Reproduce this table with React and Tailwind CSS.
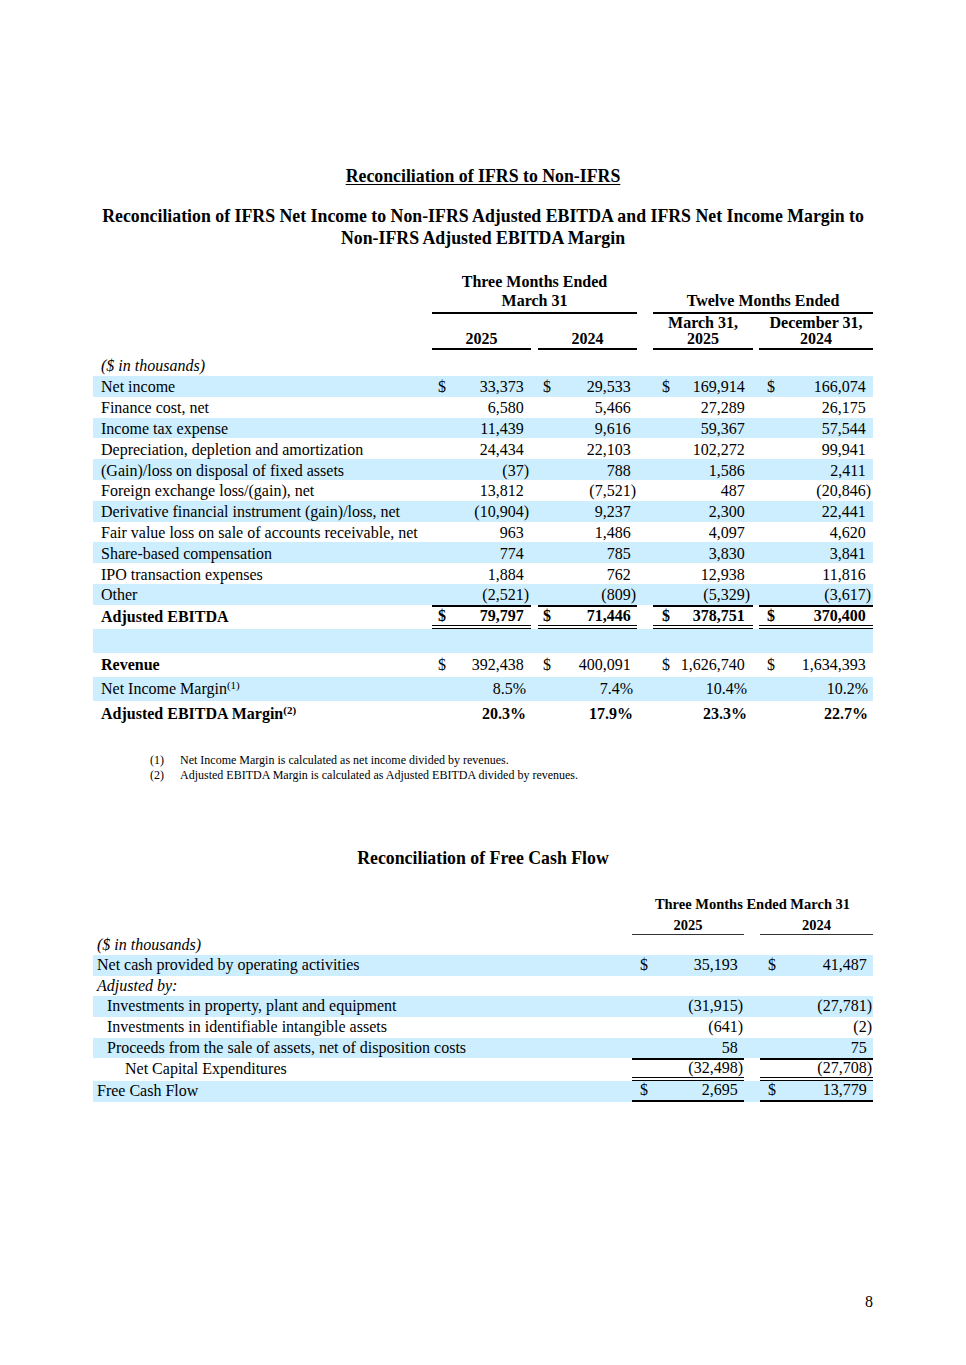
import React from 'react';

const blue = 'bg-[#cceeff]';

const cols = [
  'w-[99px] pl-[6px] pr-[2px]',
  'ml-[7px] w-[99px] pl-[5px] pr-[1px]',
  'ml-[16px] w-[100px] pl-[9px] pr-[3px]',
  'ml-[6px] w-[114px] pl-[8px] pr-[2px]',
];

const rows = [
  ['Net income', ['33,373', '29,533', '169,914', '166,074'], true],
  ['Finance cost, net', ['6,580', '5,466', '27,289', '26,175']],
  ['Income tax expense', ['11,439', '9,616', '59,367', '57,544']],
  ['Depreciation, depletion and amortization', ['24,434', '22,103', '102,272', '99,941']],
  ['(Gain)/loss on disposal of fixed assets', ['(37)', '788', '1,586', '2,411']],
  ['Foreign exchange loss/(gain), net', ['13,812', '(7,521)', '487', '(20,846)']],
  ['Derivative financial instrument (gain)/loss, net', ['(10,904)', '9,237', '2,300', '22,441']],
  ['Fair value loss on sale of accounts receivable, net', ['963', '1,486', '4,097', '4,620']],
  ['Share-based compensation', ['774', '785', '3,830', '3,841']],
  ['IPO transaction expenses', ['1,884', '762', '12,938', '11,816']],
  ['Other', ['(2,521)', '(809)', '(5,329)', '(3,617)']],
];

const Val = ({ v }) => {
  if (v.endsWith('%')) return <span className="pr-[3px]">{v}</span>;
  const neg = v.endsWith(')');
  return (
    <span>
      {v}
      {!neg && <span className="invisible">)</span>}
    </span>
  );
};

const Cells = ({ vals, dollar, extra = '' }) =>
  vals.map((v, i) => (
    <div key={i} className={`flex justify-between ${cols[i]} ${extra}`}>
      <span>{dollar ? '$' : ''}</span>
      <Val v={v} />
    </div>
  ));

const fcfRows = [
  ['Net cash provided by operating activities', ['35,193', '41,487'], 'pl-[4px]', true, true, 'h-[21px]'],
  ['Adjusted by:', ['', ''], 'pl-[4px] italic', false, false, 'h-[20px]'],
  ['Investments in property, plant and equipment', ['(31,915)', '(27,781)'], 'pl-[14px]', false, true, 'h-[21px]'],
  ['Investments in identifiable intangible assets', ['(641)', '(2)'], 'pl-[14px]', false, false, 'h-[21px]'],
  ['Proceeds from the sale of assets, net of disposition costs', ['58', '75'], 'pl-[14px]', false, true, 'h-[20px]'],
];

const fcfCols = ['w-[112px] pl-[8px] pr-[1px]', 'ml-[16px] w-[113px] pl-[8px] pr-[1px]'];

const FcfCells = ({ vals, dollar, extra = '' }) =>
  vals.map((v, i) => (
    <div key={i} className={`flex h-full items-center justify-between ${fcfCols[i]} ${extra}`}>
      <span>{dollar ? '$' : ''}</span>
      {v ? <Val v={v} /> : <span />}
    </div>
  ));

export default function App() {
  return (
    <div className="w-[966px] h-[1365px] bg-white text-black font-['Liberation_Serif',serif] text-[16px]">
      <div className="pt-[166px] text-center font-bold text-[17.8px] leading-[20px]">
        <span className="underline underline-offset-2">Reconciliation of IFRS to Non-IFRS</span>
      </div>
      <div className="mt-[19px] text-center font-bold text-[17.8px] leading-[22px]">
        Reconciliation of IFRS Net Income to Non-IFRS Adjusted EBITDA and IFRS Net Income Margin to
        <br />
        Non-IFRS Adjusted EBITDA Margin
      </div>

      <div className="ml-[93px] w-[780px] mt-[23px]">
        <div className="flex items-end font-bold">
          <div className="w-[339px]" />
          <div className="w-[205px] text-center leading-[19px] pb-[2px] border-b-2 border-black">
            Three Months Ended
            <br />
            March 31
          </div>
          <div className="ml-[16px] w-[220px] text-center leading-[19px] pb-[2px] border-b-2 border-black">
            Twelve Months Ended
          </div>
        </div>
        <div className="flex items-end font-bold leading-[16px]">
          <div className="w-[339px]" />
          <div className="w-[99px] text-center pb-[1px] border-b-2 border-black">2025</div>
          <div className="ml-[7px] w-[99px] text-center pb-[1px] border-b-2 border-black">2024</div>
          <div className="ml-[16px] w-[100px] text-center pt-[1px] pb-[1px] border-b-2 border-black">
            March 31,
            <br />
            2025
          </div>
          <div className="ml-[6px] w-[114px] text-center pt-[1px] pb-[1px] border-b-2 border-black">
            December 31,
            <br />
            2024
          </div>
        </div>
        <div className="mt-[5px] h-[21px] flex items-center pl-[8px] italic">($ in thousands)</div>

        {rows.map(([label, vals, dollar], i) => (
          <div key={label} className={`flex h-[20.8px] items-center pt-[2px] whitespace-nowrap ${i % 2 === 0 ? blue : ''}`}>
            <div className="w-[339px] pl-[8px]">{label}</div>
            <Cells vals={vals} dollar={dollar} />
          </div>
        ))}

        <div className="flex h-[24px] font-bold">
          <div className="w-[339px] pl-[8px] flex items-center">Adjusted EBITDA</div>
          <Cells
            vals={['79,797', '71,446', '378,751', '370,400']}
            dollar
            extra="items-center border-double border-black border-t-2 border-b-4"
          />
        </div>
        <div className={`h-[24px] ${blue}`} />
        <div className="flex h-[24px] items-center pt-[1px]">
          <div className="w-[339px] pl-[8px] font-bold">Revenue</div>
          <Cells vals={['392,438', '400,091', '1,626,740', '1,634,393']} dollar />
        </div>
        <div className={`flex h-[24px] items-center pt-[1px] ${blue}`}>
          <div className="w-[339px] pl-[8px]">
            Net Income Margin<sup className="text-[11px]">(1)</sup>
          </div>
          <Cells vals={['8.5%', '7.4%', '10.4%', '10.2%']} />
        </div>
        <div className="flex h-[26px] items-center pt-[1px] font-bold">
          <div className="w-[339px] pl-[8px]">
            Adjusted EBITDA Margin<sup className="text-[11px]">(2)</sup>
          </div>
          <Cells vals={['20.3%', '17.9%', '23.3%', '22.7%']} />
        </div>

        <div className="mt-[26px] pl-[57px] text-[12px] leading-[15px]">
          <div className="flex">
            <span className="w-[30px]">(1)</span>
            <span>Net Income Margin is calculated as net income divided by revenues.</span>
          </div>
          <div className="flex">
            <span className="w-[30px]">(2)</span>
            <span>Adjusted EBITDA Margin is calculated as Adjusted EBITDA divided by revenues.</span>
          </div>
        </div>
      </div>

      <div className="mt-[65px] text-center font-bold text-[17.8px] leading-[20px]">
        Reconciliation of Free Cash Flow
      </div>

      <div className="ml-[93px] w-[780px] mt-[27px]">
        <div className="flex font-bold text-[14.5px] leading-[18px]">
          <div className="w-[539px]" />
          <div className="w-[241px] text-center">Three Months Ended March 31</div>
        </div>
        <div className="flex mt-[3px] font-bold text-[14.5px] leading-[18px]">
          <div className="w-[539px]" />
          <div className="w-[112px] text-center border-b border-[#333]">2025</div>
          <div className="ml-[16px] w-[113px] text-center border-b border-[#333]">2024</div>
        </div>
        <div className="h-[20px] flex items-center pl-[4px] italic">($ in thousands)</div>

        {fcfRows.map(([label, vals, pad, dollar, isBlue, h]) => (
          <div key={label} className={`flex items-center whitespace-nowrap ${h} ${isBlue ? blue : ''}`}>
            <div className={`w-[539px] ${pad}`}>{label}</div>
            <FcfCells vals={vals} dollar={dollar} />
          </div>
        ))}

        <div className="flex h-[23px] items-center">
          <div className="w-[539px] pl-[32px]">Net Capital Expenditures</div>
          <FcfCells
            vals={['(32,498)', '(27,708)']}
            extra="border-double border-black border-t-2 border-b-4"
          />
        </div>
        <div className={`flex h-[21px] items-center ${blue}`}>
          <div className="w-[539px] pl-[4px]">Free Cash Flow</div>
          <FcfCells vals={['2,695', '13,779']} dollar extra="border-b-2 border-black" />
        </div>

        <div className="mt-[190px] text-right leading-[20px]">8</div>
      </div>
    </div>
  );
}
